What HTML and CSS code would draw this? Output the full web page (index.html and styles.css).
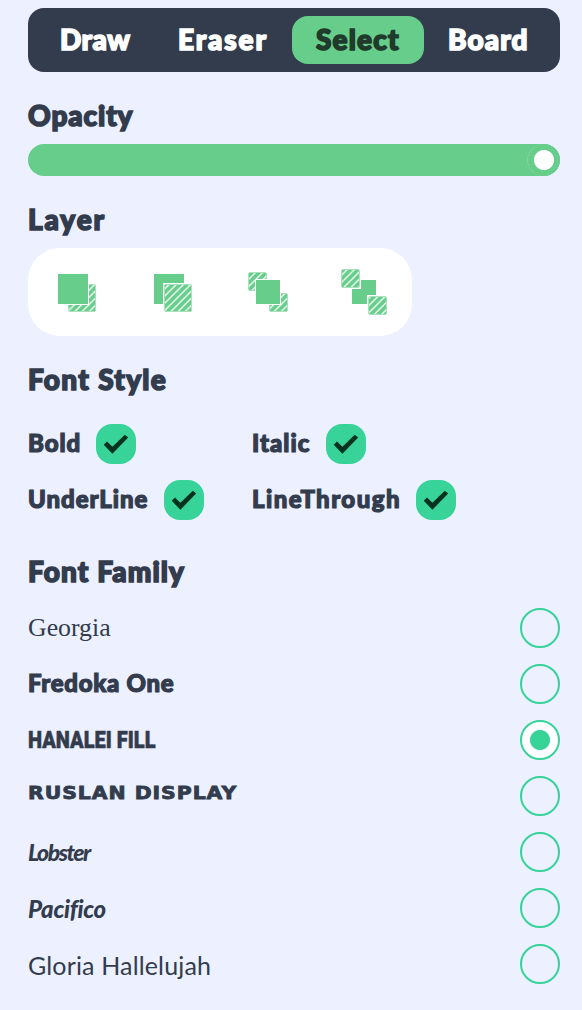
FILE: index.html
```html
<!DOCTYPE html>
<html lang="en">
<head>
<meta charset="utf-8">
<title>Tool options</title>
<link rel="stylesheet" href="styles.css">
</head>
<body>
<main class="panel">
  <nav class="tabs">
    <a class="tab t-draw">Draw</a>
    <a class="tab t-eraser">Eraser</a>
    <a class="tab t-select active">Select</a>
    <a class="tab t-board">Board</a>
  </nav>

  <section class="section">
    <h2 class="title t-opacity">Opacity</h2>
    <div class="slider"><span class="thumb"></span></div>
  </section>

  <section class="section">
    <h2 class="title t-layer">Layer</h2>
    <div class="layers">
      <svg width="48" height="48" viewBox="0 0 48 48">
        <defs>
          <pattern id="hatch" width="7.2" height="7.2" patternUnits="userSpaceOnUse" x="1.6">
            <rect width="7.2" height="7.2" fill="#66cd8a"/>
            <path d="M-1 8.2L8.2-1M-1 1L1-1M6.2 8.2L8.2 6.2" stroke="#fff" stroke-width="1.3"/>
          </pattern>
        </defs>
        <rect class="hatched" x="16.5" y="16.5" width="27" height="27" rx="1"/>
        <rect class="solid over" x="5.5" y="5.5" width="31" height="31"/>
      </svg>
      <svg width="48" height="48" viewBox="0 0 48 48">
        <rect class="solid" x="6" y="6" width="30" height="30"/>
        <rect class="gap" x="15" y="15" width="29" height="29"/>
        <rect class="hatched" x="16.5" y="16.5" width="27" height="27" rx="1"/>
      </svg>
      <svg width="48" height="48" viewBox="0 0 48 48">
        <rect class="hatched" x="4.5" y="4.5" width="18" height="18" rx="1.5"/>
        <rect class="hatched" x="25.5" y="25.5" width="18" height="18" rx="1.5"/>
        <rect class="solid over" x="11.5" y="11.5" width="25" height="25"/>
      </svg>
      <svg width="48" height="48" viewBox="0 0 48 48">
        <rect class="solid" x="12" y="12" width="24" height="24"/>
        <rect class="gap" x="1" y="1" width="20" height="20"/>
        <rect class="gap" x="27" y="27" width="20" height="20"/>
        <rect class="hatched" x="1.5" y="1.5" width="18" height="18" rx="1.5"/>
        <rect class="hatched" x="28.5" y="28.5" width="18" height="18" rx="1.5"/>
      </svg>
    </div>
  </section>

  <section class="section">
    <h2 class="title t-style">Font Style</h2>
    <div class="checks">
      <label class="check c-bold"><span class="name">Bold</span><svg class="box" viewBox="0 0 40 40"><path d="M7.7 20.8L11 17.6L16.4 22.8L28.8 10.7L32.2 13.6L16.4 29.8Z"/></svg></label>
      <label class="check c-italic"><span class="name">Italic</span><svg class="box" viewBox="0 0 40 40"><path d="M7.7 20.8L11 17.6L16.4 22.8L28.8 10.7L32.2 13.6L16.4 29.8Z"/></svg></label>
      <label class="check c-under"><span class="name">UnderLine</span><svg class="box" viewBox="0 0 40 40"><path d="M7.7 20.8L11 17.6L16.4 22.8L28.8 10.7L32.2 13.6L16.4 29.8Z"/></svg></label>
      <label class="check c-through"><span class="name">LineThrough</span><svg class="box" viewBox="0 0 40 40"><path d="M7.7 20.8L11 17.6L16.4 22.8L28.8 10.7L32.2 13.6L16.4 29.8Z"/></svg></label>
    </div>
  </section>

  <section class="section">
    <h2 class="title t-family">Font Family</h2>
    <div class="fonts">
      <label class="font"><span class="georgia">Georgia</span><i class="radio"></i></label>
      <label class="font"><span class="fredoka">Fredoka One</span><i class="radio"></i></label>
      <label class="font"><span class="hanalei">HANALEI FILL</span><i class="radio on"></i></label>
      <label class="font"><span class="ruslan">RUSLAN DISPLAY</span><i class="radio"></i></label>
      <label class="font"><span class="lobster">Lobster</span><i class="radio"></i></label>
      <label class="font"><span class="pacifico">Pacifico</span><i class="radio"></i></label>
      <label class="font"><span class="gloria">Gloria Hallelujah</span><i class="radio"></i></label>
    </div>
  </section>
</main>
</body>
</html>
```
FILE: styles.css
```css
* { box-sizing: border-box; }

body {
  margin: 0;
  min-height: 1010px;
  background: #ecf0ff;
  color: #333c4d;
  font-family: "Fredoka One", Lato, sans-serif;
  font-weight: 900;
}

.panel { padding: 8px 22px 26px 28px; }

.tabs {
  display: grid;
  grid-template-columns: 118px 138px 132px 128px;
  height: 64px;
  padding: 8px;
  border-radius: 16px;
  background: #333c4d;
}

.tab, .title, .name, .fredoka {
  white-space: nowrap;
  -webkit-text-stroke: 1.6px currentColor;
}

.tab {
  padding-left: 24px;
  border-radius: 16px;
  color: #fff;
  font-size: 28px;
  line-height: 46px;
}
.tab.active { background: #66cd8a; color: #203a2b; }
.t-draw { letter-spacing: 0.5px; }
.t-eraser { letter-spacing: 1.9px; }
.t-select { letter-spacing: 1.2px; }
.t-board { letter-spacing: 1.1px; }

.section { margin-top: 28px; }

.title {
  height: 32px;
  margin: 0 0 12px;
  font-size: 28px;
  font-weight: 900;
  line-height: 30px;
}
.title.t-style { margin-bottom: 28px; }
.title.t-family { margin-bottom: 20px; }
.t-opacity { letter-spacing: 0.9px; }
.t-layer { letter-spacing: 1.9px; }
.t-style { letter-spacing: 1.3px; }
.t-family { letter-spacing: 1.1px; }

.slider {
  display: flex;
  justify-content: flex-end;
  height: 32px;
  border-radius: 16px;
  background: #66cd8a;
}
.thumb {
  width: 32px;
  height: 32px;
  border-radius: 50%;
  background: radial-gradient(circle, #fff 9.6px, #66cd8a 10.4px);
  box-shadow: -0.5px 0 0 #a0dfb6;
}

.layers {
  display: grid;
  grid-template-columns: repeat(4, 96px);
  place-items: center;
  width: 384px;
  height: 88px;
  border-radius: 32px;
  background: #fff;
}
.solid { fill: #66cd8a; }
.over { stroke: #fff; stroke-width: 1; }
.gap { fill: #fff; }
.hatched { fill: url(#hatch); stroke: #a8e1bc; stroke-width: 1; }

.checks {
  display: grid;
  grid-template-columns: 224px 1fr;
  gap: 16px 0;
  margin-bottom: 36px;
}
.check { display: flex; height: 40px; }
.name { font-size: 24px; line-height: 38px; -webkit-text-stroke-width: 1.2px; }
.c-bold .name { width: 68px; letter-spacing: 0.9px; }
.c-italic .name { width: 74px; letter-spacing: 1px; }
.c-under .name { width: 136px; letter-spacing: 0.95px; }
.c-through .name { width: 164px; letter-spacing: 1.45px; }
.box {
  width: 40px;
  height: 40px;
  border-radius: 16px;
  background: #38d399;
  fill: #003320;
}

.fonts { display: grid; gap: 16px; }
.font {
  display: flex;
  justify-content: space-between;
  height: 40px;
  overflow: hidden;
  line-height: 40px;
  white-space: nowrap;
}
.radio {
  width: 40px;
  height: 40px;
  border: 2px solid #38d399;
  border-radius: 50%;
}
.radio.on { background: radial-gradient(circle, #38d399 9.6px, #fff 10.4px); }

.georgia { font: 400 25.8px/40px "Liberation Serif", serif; }
.fredoka { font-size: 24px; line-height: 38px; letter-spacing: 0.7px; -webkit-text-stroke-width: 1.2px; }
.hanalei {
  font: 900 23px/42px Roboto, sans-serif;
  letter-spacing: 0;
  transform: scaleX(0.87);
  transform-origin: left;
  -webkit-text-stroke: 0.5px currentColor;
}
.ruslan {
  font: 700 17px/34px "DejaVu Sans", sans-serif;
  letter-spacing: 0.8px;
  transform: scaleX(1.2);
  transform-origin: left;
  -webkit-text-stroke: 0.8px currentColor;
}
.lobster { font: italic 900 23px/40px Lato, sans-serif; letter-spacing: -1.5px; }
.pacifico { font: italic 900 24px/41px Lato, sans-serif; letter-spacing: -0.3px; }
.gloria { font: 400 25px/42px Lato, sans-serif; letter-spacing: 0.15px; }
```
